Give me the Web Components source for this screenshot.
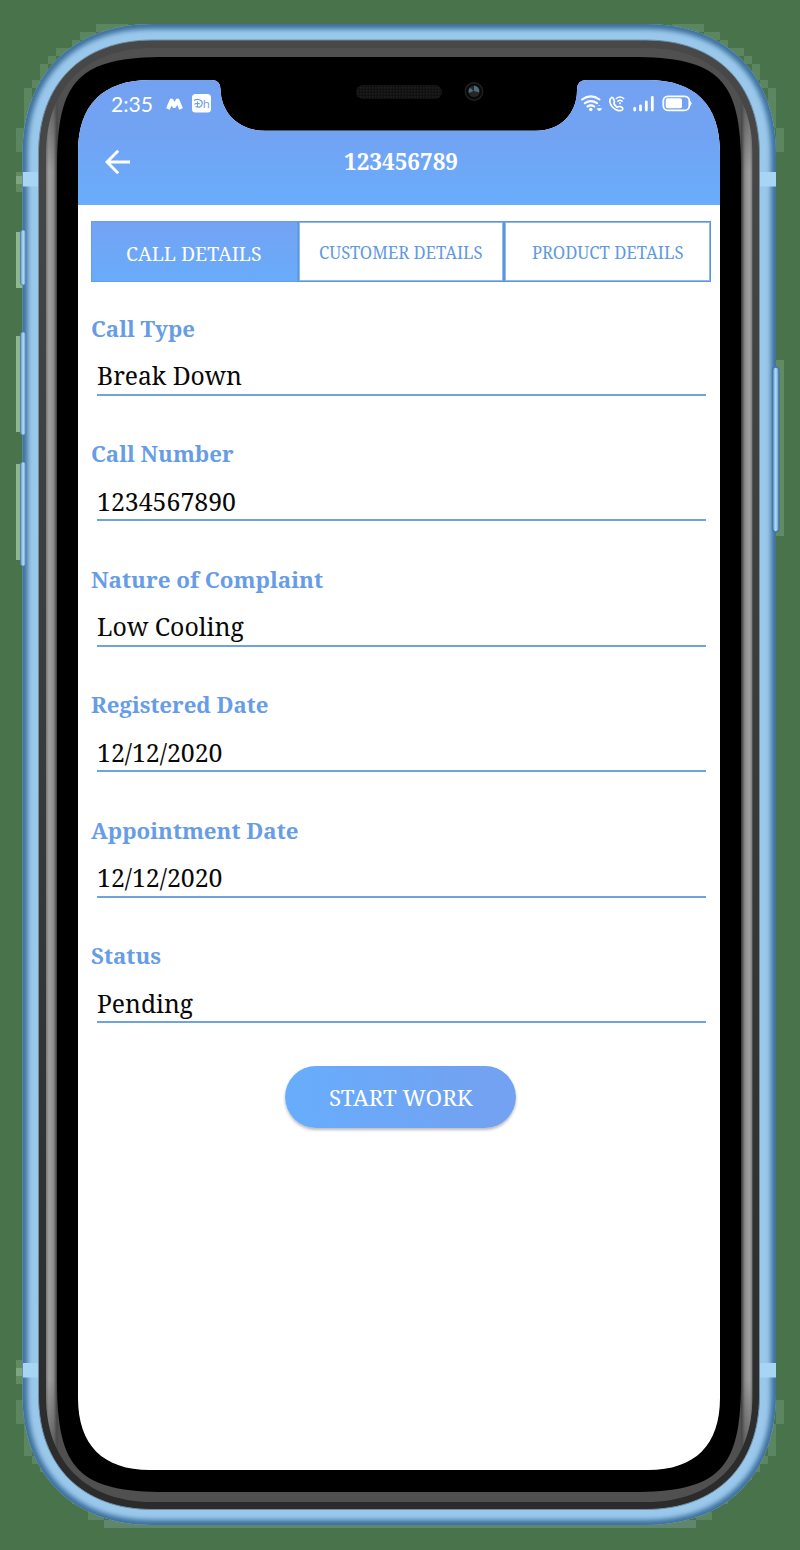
<!DOCTYPE html>
<html lang="en"><head><meta charset="utf-8"><title>Call details</title>
<style>html,body{margin:0;background:#48734b}body{width:800px;height:1550px;overflow:hidden}</style></head>
<body>
<phone-frame>
  <app-header heading="123456789"></app-header>
  <tab-bar>
    <tab-item active w="135.5" size="20.5" label="CALL DETAILS"></tab-item>
    <tab-item w="163.5" size="17.5" label="CUSTOMER DETAILS"></tab-item>
    <tab-item w="151.5" size="17.5" label="PRODUCT DETAILS"></tab-item>
  </tab-bar>
  <detail-list>
    <detail-field label="Call Type" lw="104" value="Break Down" vw="145"></detail-field>
    <detail-field label="Call Number" lw="142.5" value="1234567890" vw="139"></detail-field>
    <detail-field label="Nature of Complaint" lw="232" value="Low Cooling" vw="147"></detail-field>
    <detail-field label="Registered Date" lw="177.5" value="12/12/2020" vw="125.5"></detail-field>
    <detail-field label="Appointment Date" lw="207.5" value="12/12/2020" vw="125.5"></detail-field>
    <detail-field label="Status" lw="70" value="Pending" vw="96"></detail-field>
  </detail-list>
  <action-button label="START WORK" w="143.5"></action-button>
</phone-frame>
<script>
const define = (name, render) => customElements.define(name, class extends HTMLElement {
  connectedCallback() {
    if (this.shadowRoot) return;
    this.attachShadow({mode: 'open'}).innerHTML = render(k => this.getAttribute(k));
  }
});

/* One line of text fitted to an exact width */
define('fit-label', a => `
<style>:host{display:block;flex:none}svg{display:block;overflow:visible}
text{font-family:"Noto Serif","Droid Serif","DejaVu Serif Condensed","DejaVu Serif",serif;fill:currentColor}</style>
<svg width="${a('w')}" height="${a('size')}"><text x="0" y="${a('size') * .86}" textLength="${a('w')}" lengthAdjust="spacingAndGlyphs" font-size="${a('size')}" font-weight="${a('weight') || 400}" ${a('family') ? `style="font-family:${a('family')}"` : ''}>${a('text')}</text></svg>`);

const rr = (x, y, X, Y, a, c) => `M${x} ${y+a}C${x} ${y+a-c} ${x+a-c} ${y} ${x+a} ${y}H${X-a}C${X-a+c} ${y} ${X} ${y+a-c} ${X} ${y+a}V${Y-a}C${X} ${Y-a+c} ${X-a+c} ${Y} ${X-a} ${Y}H${x+a}C${x+a-c} ${Y} ${x} ${Y-a+c} ${x} ${Y-a}Z`;
const outer = rr(22.5, 24, 776, 1525, 130, 80);
const inner = rr(38.5, 40, 759.5, 1509.5, 114, 70.5);
const rim = rr(46, 48, 752.5, 1502, 106, 66);
const glass = rr(57, 57, 741, 1492, 110, 88);
const halo = [[16,128,8,24],[24,104,8,24],[24,88,8,16],[32,80,8,8],[40,64,8,16],[48,56,8,8],[56,48,8,8],[64,48,8,8],[72,40,8,8],[80,32,16,8],[96,24,32,8],
 [16,1400,8,24],[24,1424,8,32],[32,1456,8,8],[40,1464,8,8],[48,1472,8,8],[56,1480,8,8],[64,1488,8,8],[72,1496,8,8],[88,1512,16,8]];
define('phone-frame', () => `
<style>
:host{display:grid;width:800px;height:1550px}
.body,.screen{grid-area:1/1}
.body{display:block}
.screen{margin:80px 80px 80px 78px;width:642px;height:1390px;display:flex;flex-direction:column;background:#fff;
clip-path:path("M0 72C0 25 25 0 72 0H133Q142.500 0 142.500 9C143 34 162 50.800 187 50.800H458C482 50.800 499 34 499 10Q499 0 508 0H570C617 0 642 25 642 72V1318C642 1365 617 1390 570 1390H72C25 1390 0 1365 0 1318Z")}
</style>
<svg class="body" width="800" height="1550">
<defs>
<clipPath id="o"><path d="${outer}"/></clipPath><clipPath id="r"><path d="${rim}"/></clipPath>
<filter id="b" x="-5%" y="-5%" width="110%" height="110%"><feGaussianBlur stdDeviation="2.800"/></filter>
<linearGradient id="gl"><stop offset="0" stop-color="#777"/><stop offset=".25" stop-color="#a0a0a0"/><stop offset=".65" stop-color="#8c8c8c"/><stop offset="1" stop-color="#333"/></linearGradient>
<linearGradient id="gr" x1="1" x2="0"><stop offset="0" stop-color="#777"/><stop offset=".25" stop-color="#a0a0a0"/><stop offset=".65" stop-color="#8c8c8c"/><stop offset="1" stop-color="#333"/></linearGradient>
<linearGradient id="fade" x2="0" y2="1"><stop offset=".05" stop-color="#000"/><stop offset=".11" stop-color="#fff"/><stop offset=".89" stop-color="#fff"/><stop offset=".95" stop-color="#000"/></linearGradient>
<mask id="m" maskUnits="userSpaceOnUse" x="0" y="0" width="800" height="1550"><rect width="800" height="1550" fill="url(#fade)"/></mask>
<linearGradient id="key"><stop offset="0" stop-color="#5c90c2"/><stop offset=".5" stop-color="#b4dcf8"/><stop offset="1" stop-color="#5b8dbb"/></linearGradient>
<linearGradient id="dk" x2="0" y2="1"><stop stop-color="#484848"/><stop offset="1" stop-color="#2b2b2b"/></linearGradient>
<pattern id="mesh" width="3" height="3" patternUnits="userSpaceOnUse"><rect width="3" height="3" fill="#111"/><rect width="1.500" height="1.500" fill="#1e1e1e"/></pattern>
</defs>
<rect width="800" height="1550" fill="#48734b"/>
<g fill="#5c8660">${halo.map(([x,y,w,h]) => `<rect x="${x}" y="${y}" width="${w}" height="${h}"/><rect x="${800-x-w}" y="${y}" width="${w}" height="${h}"/>`).join('')}
<path d="M104 1520H696V1528H104Z" fill="#60876b"/></g>
<g fill="#8fb88f"><rect x="16" y="232" width="8" height="56"/><rect x="16" y="336" width="8" height="96"/><rect x="16" y="464" width="8" height="96"/></g>
<g fill="#628b62"><rect x="16" y="172" width="8" height="20"/><rect x="16" y="1360" width="8" height="24"/><rect x="776" y="360" width="8" height="176"/></g>
<g fill="#7ea680"><rect x="16" y="176" width="7" height="8"/><rect x="16" y="1368" width="7" height="8"/></g>
<path d="${outer}" fill="#9ac8eb"/>
<g clip-path="url(#o)"><path d="${outer}" fill="none" stroke="#3d6f9d" stroke-width="10" filter="url(#b)"/></g>
<path d="${inner}" fill="url(#dk)" stroke="#6f8fa9" stroke-width="1"/>
<g fill="#a9d5f4"><rect x="23" y="172" width="15" height="14.500"/><rect x="760" y="172" width="16" height="14.500"/><rect x="23" y="1363" width="15" height="14.500"/><rect x="760" y="1363" width="16" height="14.500"/></g>
<g fill="url(#key)" stroke="#4c7dab" stroke-width=".8"><rect x="20.400" y="230" width="5.600" height="55" rx="2.500"/><rect x="20.400" y="332" width="5.600" height="103" rx="2.500"/><rect x="20.400" y="462" width="5.600" height="104" rx="2.500"/></g>
<rect x="772.500" y="367" width="6.500" height="165" rx="3.200" fill="url(#key)" stroke="#4578a8" stroke-width="1.500"/>
<path d="${rim}" fill="#505050"/>
<g clip-path="url(#r)" mask="url(#m)"><rect x="46" y="48" width="11.500" height="1454" fill="url(#gl)"/><rect x="741" y="48" width="11.500" height="1454" fill="url(#gr)"/></g>
<path d="${glass}"/>
<rect x="356" y="85" width="86" height="14" rx="7" fill="url(#mesh)"/>
<circle cx="474" cy="91.500" r="8.700" fill="#090909" stroke="#1f1f1f" stroke-width="1.500"/><circle cx="474" cy="91.300" r="5.800" fill="#252525"/><path d="M473.500 91L470 87.500A5.500 5.500 0 0 0 468.800 93ZM474 91V85.500A5.500 5.500 0 0 1 479 92.500Z" fill="#4a6b80"/>
</svg>
<div class="screen"><slot></slot></div>`);

define('status-bar', () => `
<style>:host{display:flex;align-items:center;color:#fff;padding:12px 28.500px 0 33px;box-sizing:border-box;height:36px}
.sp{flex:1}svg{display:block;flex:none}</style>
<fit-label w="42" size="21.500" text="2:35" family="Lato,'Noto Sans',sans-serif"></fit-label>
<svg style="margin-left:13px" width="17" height="14" viewBox="0 0 17 14"><path d="M2 12L5.500 3.500L8.300 9L11.600 3.500L15 12" fill="none" stroke="#fff" stroke-width="4" stroke-linejoin="round" stroke-linecap="butt"/></svg>
<svg style="margin-left:8.500px" width="19" height="19" viewBox="0 0 19 19"><rect width="19" height="18.500" rx="3.500" fill="#fff"/><g fill="none" stroke="#6c9fee" stroke-width="1.200"><path d="M2 6.500C5 4.500 10.500 5.500 10.300 9.500C10 13 6.500 14 3.500 12.500M5.500 7.500V13M2.500 10.500C4 9 6 9 7.800 10"/></g><text x="10.800" y="13.500" font-family="Noto Sans,sans-serif" font-size="11.500" fill="#6c9fee">h</text></svg>
<span class="sp"></span>
<svg width="112" height="20" viewBox="580 94 112 20" fill="none" stroke="#fff" stroke-linecap="round" stroke-width="2.100">
<path d="M582 99.500Q591 93.300 599.500 99.500M584.800 103.200Q591 99 597 103.200M587.500 106.500Q591 104.300 594.300 106.500"/><circle cx="590.800" cy="109.500" r="1.700" fill="#fff" stroke="none"/><path d="M597.500 109L599.400 111L601.300 109ZM598.900 105.500H599.300" fill="#fff" stroke-width=".9"/>
<path d="M611.500 97.600C608.800 99.300 609.500 104 612.500 107C615.500 110.300 620 111.600 622.300 109.800C623.600 108.500 622.300 107.300 620.500 106.600C618.500 105.900 618 108 616.500 106.800C614.500 105 613.700 103.700 614 102.600C615.300 101.300 614 99.600 613 98.100Q612.300 97.200 611.500 97.600Z" stroke-width="1.700"/><path d="M616.300 98.500Q620 95.500 623.700 98.500M617.900 101.200Q620.100 99.500 622.200 101.200" stroke-width="1.500"/><circle cx="620" cy="103.300" r="1" fill="#fff" stroke="none"/>
<path d="M634.700 108.500V110M640.500 106V110M646.300 102V110M652.300 97.500V110" stroke-width="2.800"/>
<rect x="663.300" y="96.300" width="26" height="14" rx="4.500" stroke-width="1.800"/><rect x="665.700" y="98.300" width="16.300" height="10" rx="1.800" fill="#fff" stroke="none"/><path d="M690.200 101.200Q692.500 103.300 690.200 105.600Z" fill="#fff" stroke-width=".8"/>
</svg>`);

define('app-header', a => `
<style>:host{display:flex;flex-direction:column;height:125px;flex:none;color:#fff;background:linear-gradient(#73a1f1,#72a3f3 45%,#69adfc)}
.nav{display:grid;grid-template-columns:53px 1fr 53px;align-items:center;height:92px;box-sizing:border-box;padding-top:3.500px}
svg{margin-left:27px;display:block}.t{justify-self:center;padding-left:4px}</style>
<status-bar></status-bar>
<div class="nav"><svg width="26" height="26" viewBox="0 0 26 26" fill="none" stroke="#fff" stroke-width="2.900"><path d="M25 13H3M13.200 1.700L2 13L13.200 24.300"/></svg>
<fit-label class="t" w="114" size="23.500" weight="700" text="${a('heading')}"></fit-label></div>`);

define('tab-bar', () => `
<style>:host{display:grid;grid-template-columns:207px 206.500px 207px;height:61px;margin:16px 0 0 12.500px;flex:none}</style><slot></slot>`);
define('tab-item', a => `
<style>:host{display:flex;align-items:center;justify-content:center;box-sizing:border-box;border:1px solid #5c97dc;box-shadow:inset 0 0 0 1px #8fb9ec;color:#619ae0;padding-top:2.500px}
:host([active]){background:linear-gradient(#74a3f3,#69abfb);color:#fff;border-color:#659ee9;box-shadow:none}</style>
<fit-label w="${a('w')}" size="${a('size')}" text="${a('label')}"></fit-label>`);

define('detail-list', () => `
<style>:host{display:grid;grid-auto-rows:125.600px;margin-top:35.500px;flex:none}</style><slot></slot>`);
define('detail-field', a => `
<style>:host{display:block;padding-left:12.500px}.l{color:#669de6}
.v{margin:23px 14.500px 0 6.200px;border-bottom:2px solid #6fa4da;height:30.500px;color:#080808}</style>
<fit-label class="l" w="${a('lw')}" size="22.500" weight="700" text="${a('label')}"></fit-label>
<div class="v"><fit-label w="${a('vw')}" size="25" text="${a('value')}"></fit-label></div>`);

define('action-button', a => `
<style>:host{display:flex;align-items:center;justify-content:center;width:231px;height:62px;box-sizing:border-box;padding-top:1.500px;margin:-5px 0 0 207px;border-radius:31px;background:linear-gradient(80deg,#67adfd,#72a2f1 85%);box-shadow:0 2px 3px #0004;color:#fff;flex:none}</style>
<fit-label w="${a('w')}" size="22.500" text="${a('label')}"></fit-label>`);
</script>
</body></html>
